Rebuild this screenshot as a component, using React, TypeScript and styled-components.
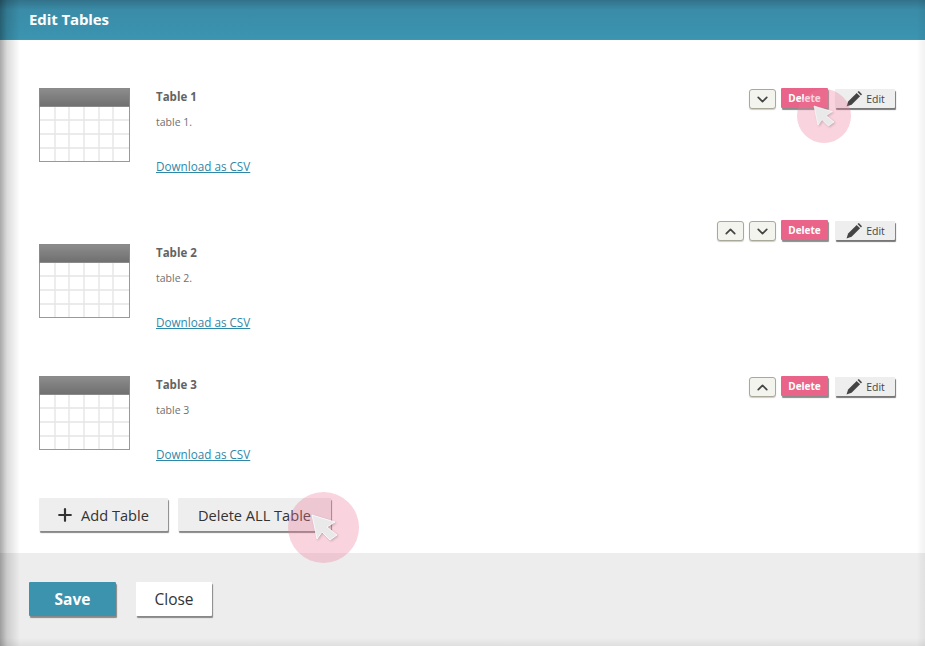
import React from 'react';
import styled, { createGlobalStyle } from 'styled-components';
import { Plus, ChevronUp, ChevronDown } from 'lucide-react';

const GlobalStyle = createGlobalStyle`
  html, body {
    margin: 0;
    padding: 0;
    background: #fff;
  }
  * {
    box-sizing: border-box;
  }
`;

const Page = styled.div`
  position: relative;
  width: 925px;
  height: 646px;
  overflow: hidden;
  display: flex;
  flex-direction: column;
  font-family: 'Open Sans', 'Liberation Sans', sans-serif;
  color: #555;
  &::after {
    content: '';
    position: absolute;
    inset: 0;
    pointer-events: none;
    background: linear-gradient(to right, rgba(0, 0, 0, 0.34) 0, rgba(0, 0, 0, 0.14) 7px, rgba(0, 0, 0, 0) 20px),
      linear-gradient(to left, rgba(0, 0, 0, 0.05) 0, rgba(0, 0, 0, 0.03) 4px, rgba(0, 0, 0, 0) 8px),
      linear-gradient(to top, rgba(0, 0, 0, 0.06) 0, rgba(0, 0, 0, 0) 8px);
  }
`;

const Header = styled.header`
  height: 40px;
  padding: 0 29px 2px;
  display: flex;
  align-items: center;
  flex: none;
  background: linear-gradient(to bottom, #32728a 0, #3a8ca8 10px, #3b94b0 100%);
  border-bottom: 1px solid #4a93a8;
  box-shadow: 0 1px 2px rgba(0, 0, 0, 0.25);
  color: #fff;
  font-size: 15px;
  font-weight: 700;
  letter-spacing: -0.1px;
`;

const Content = styled.main`
  flex: 1;
  min-height: 0;
  padding: 48px 30px 0 39px;
  background: #fff;
`;

const Row = styled.section`
  display: flex;
  flex-wrap: wrap;
  align-items: flex-start;
  margin-bottom: 44px;
`;

const TableIcon = styled.svg`
  width: 91px;
  height: 74px;
  flex: none;
  margin-right: 26px;
`;

const Info = styled.div`
  flex: 1;
`;

const Title = styled.h3`
  margin: 0;
  padding-top: 1px;
  font-size: 11.5px;
  line-height: 16px;
  font-weight: 700;
  color: #636363;
`;

const Note = styled.p`
  margin: 9px 0 0;
  font-size: 10.5px;
  line-height: 16px;
  color: #707070;
`;

const CsvLink = styled.a`
  display: inline-block;
  margin-top: 28px;
  font-size: 11.7px;
  line-height: 16px;
  color: #2f88a8;
  text-decoration: underline;
`;

const Actions = styled.div<{ $above?: boolean }>`
  display: flex;
  align-items: flex-start;
  justify-content: flex-end;
  ${(p) => p.$above && 'order: -1; width: 100%; height: 24px;'}
`;

const Arrow = styled.button`
  width: 27px;
  height: 20px;
  margin: 1px 5px 0 0;
  padding: 0;
  display: flex;
  align-items: center;
  justify-content: center;
  background: #f4f4ef;
  border: 1px solid #a9a99a;
  border-radius: 3px;
  box-shadow: 0 1px 1px rgba(0, 0, 0, 0.2);
  color: #444;
`;

const DeleteButton = styled.button`
  width: 47px;
  height: 20px;
  padding: 0;
  border: 0;
  border-radius: 1px;
  background: #ea6489;
  box-shadow: 1px 2px 1px #8b8b8b;
  color: #fff;
  font: 700 10px 'Open Sans', sans-serif;
`;

const EditButton = styled.button`
  width: 60px;
  height: 19px;
  margin: 1px 0 0 7px;
  padding: 0 0 0 1px;
  display: flex;
  align-items: center;
  justify-content: center;
  gap: 4px;
  border: 0;
  border-radius: 1px;
  background: #eeeeee;
  box-shadow: 1px 2px 1px #777;
  color: #444;
  font: 400 10.5px 'Open Sans', sans-serif;
`;

const PencilGlyph = styled.svg`
  width: 16px;
  height: 16px;
  flex: none;
`;

const BulkBar = styled.div`
  display: flex;
  gap: 10px;
  margin-top: -10px;
`;

const BulkButton = styled.button<{ $width: number; $iconed?: boolean }>`
  width: ${(p) => p.$width}px;
  height: 33px;
  padding: 0 ${(p) => (p.$iconed ? '3px' : '0')} 0 0;
  display: flex;
  align-items: center;
  justify-content: center;
  gap: 6px;
  border: 0;
  border-radius: 1px;
  background: #eeeeee;
  box-shadow: 1px 2px 1px #888;
  color: #333;
  font: 400 14.6px 'Open Sans', sans-serif;
`;

const Footer = styled.footer`
  height: 93px;
  flex: none;
  padding: 29px 29px 0;
  display: flex;
  align-items: flex-start;
  gap: 20px;
  background: #ededed;
`;

const FooterButton = styled.button<{ $primary?: boolean; $width: number }>`
  width: ${(p) => p.$width}px;
  height: 34px;
  padding: 0;
  border: 0;
  border-radius: 1px;
  background: ${(p) => (p.$primary ? '#3b93ae' : '#fff')};
  box-shadow: 1px 2px 1px #888;
  color: ${(p) => (p.$primary ? '#fff' : '#333')};
  font: ${(p) => (p.$primary ? 700 : 400)} 15.5px 'Open Sans', sans-serif;
`;

const Pointer = styled.div<{ $x: number; $y: number; $size: number }>`
  position: absolute;
  left: ${(p) => p.$x}px;
  top: ${(p) => p.$y}px;
  width: ${(p) => p.$size}px;
  height: ${(p) => p.$size}px;
  border-radius: 50%;
  background: rgba(238, 120, 155, 0.33);
`;

const PointerArrow = styled.svg<{ $left: number; $top: number; $size: number }>`
  position: absolute;
  left: ${(p) => p.$left}px;
  top: ${(p) => p.$top}px;
  width: ${(p) => p.$size}px;
  height: ${(p) => p.$size}px;
  overflow: visible;
  filter: drop-shadow(1px 1px 1px rgba(0, 0, 0, 0.2));
`;

const columns = [16, 30, 45, 60, 74];
const lines = [32, 46, 60];

const TableGlyph = () => (
  <TableIcon viewBox="0 0 91 74">
    <defs>
      <linearGradient id="headShade" x1="0" y1="0" x2="0" y2="1">
        <stop offset="0" stopColor="#8d8d8d" />
        <stop offset="1" stopColor="#6f6f6f" />
      </linearGradient>
    </defs>
    <rect x="0.5" y="0.5" width="90" height="73" fill="#fff" stroke="#999" />
    {columns.map((x) => (
      <line key={x} x1={x} y1="18" x2={x} y2="73" stroke="#e4e4e4" strokeWidth="1.3" />
    ))}
    {lines.map((y) => (
      <line key={y} x1="1" y1={y} x2="90" y2={y} stroke="#e4e4e4" strokeWidth="1.3" />
    ))}
    <rect x="0.5" y="0.5" width="90" height="18" fill="url(#headShade)" stroke="#8a8a8a" />
  </TableIcon>
);

const rows = [
  { title: 'Table 1', note: 'table 1.', up: false, down: true },
  { title: 'Table 2', note: 'table 2.', up: true, down: true, above: true },
  { title: 'Table 3', note: 'table 3', up: true, down: false },
];

export default function App() {
  return (
    <Page>
      <GlobalStyle />
      <Header>Edit Tables</Header>
      <Content>
        {rows.map((row) => (
          <Row key={row.title}>
            <TableGlyph />
            <Info>
              <Title>{row.title}</Title>
              <Note>{row.note}</Note>
              <CsvLink href="#">Download as CSV</CsvLink>
            </Info>
            <Actions $above={row.above}>
              {row.up && (
                <Arrow>
                  <ChevronUp size={17} strokeWidth={2.4} />
                </Arrow>
              )}
              {row.down && (
                <Arrow>
                  <ChevronDown size={17} strokeWidth={2.4} />
                </Arrow>
              )}
              <DeleteButton>Delete</DeleteButton>
              <EditButton>
                <PencilGlyph viewBox="0 0 15 15">
                  <path d="M0.5 14.5 L2 9.8 L10 1.8 L13.2 5 L5.2 13 Z" fill="#444" />
                  <path d="M10.8 1 L12 0 L15 3 L14 4.2 Z" fill="#444" />
                </PencilGlyph>
                Edit
              </EditButton>
            </Actions>
          </Row>
        ))}
        <BulkBar>
          <BulkButton $width={129} $iconed>
            <Plus size={20} strokeWidth={2.6} />
            Add Table
          </BulkButton>
          <BulkButton $width={153}>Delete ALL Table</BulkButton>
        </BulkBar>
      </Content>
      <Footer>
        <FooterButton $primary $width={87}>
          Save
        </FooterButton>
        <FooterButton $width={76}>Close</FooterButton>
      </Footer>
      <Pointer $x={797} $y={89} $size={54}>
        <PointerArrow $left={17} $top={17} $size={20} viewBox="0 0 25 25">
          <path d="M0 0 L23 7 L15 12 L25 20 L18 25 L10 17 L5 24 Z" fill="#e9e9e9" stroke="#fff" strokeWidth="0.8" />
        </PointerArrow>
      </Pointer>
      <Pointer $x={288} $y={492} $size={71}>
        <PointerArrow $left={24} $top={23} $size={25} viewBox="0 0 25 25">
          <path d="M0 0 L23 7 L15 12 L25 20 L18 25 L10 17 L5 24 Z" fill="#e9e9e9" stroke="#fff" strokeWidth="0.8" />
        </PointerArrow>
      </Pointer>
    </Page>
  );
}
